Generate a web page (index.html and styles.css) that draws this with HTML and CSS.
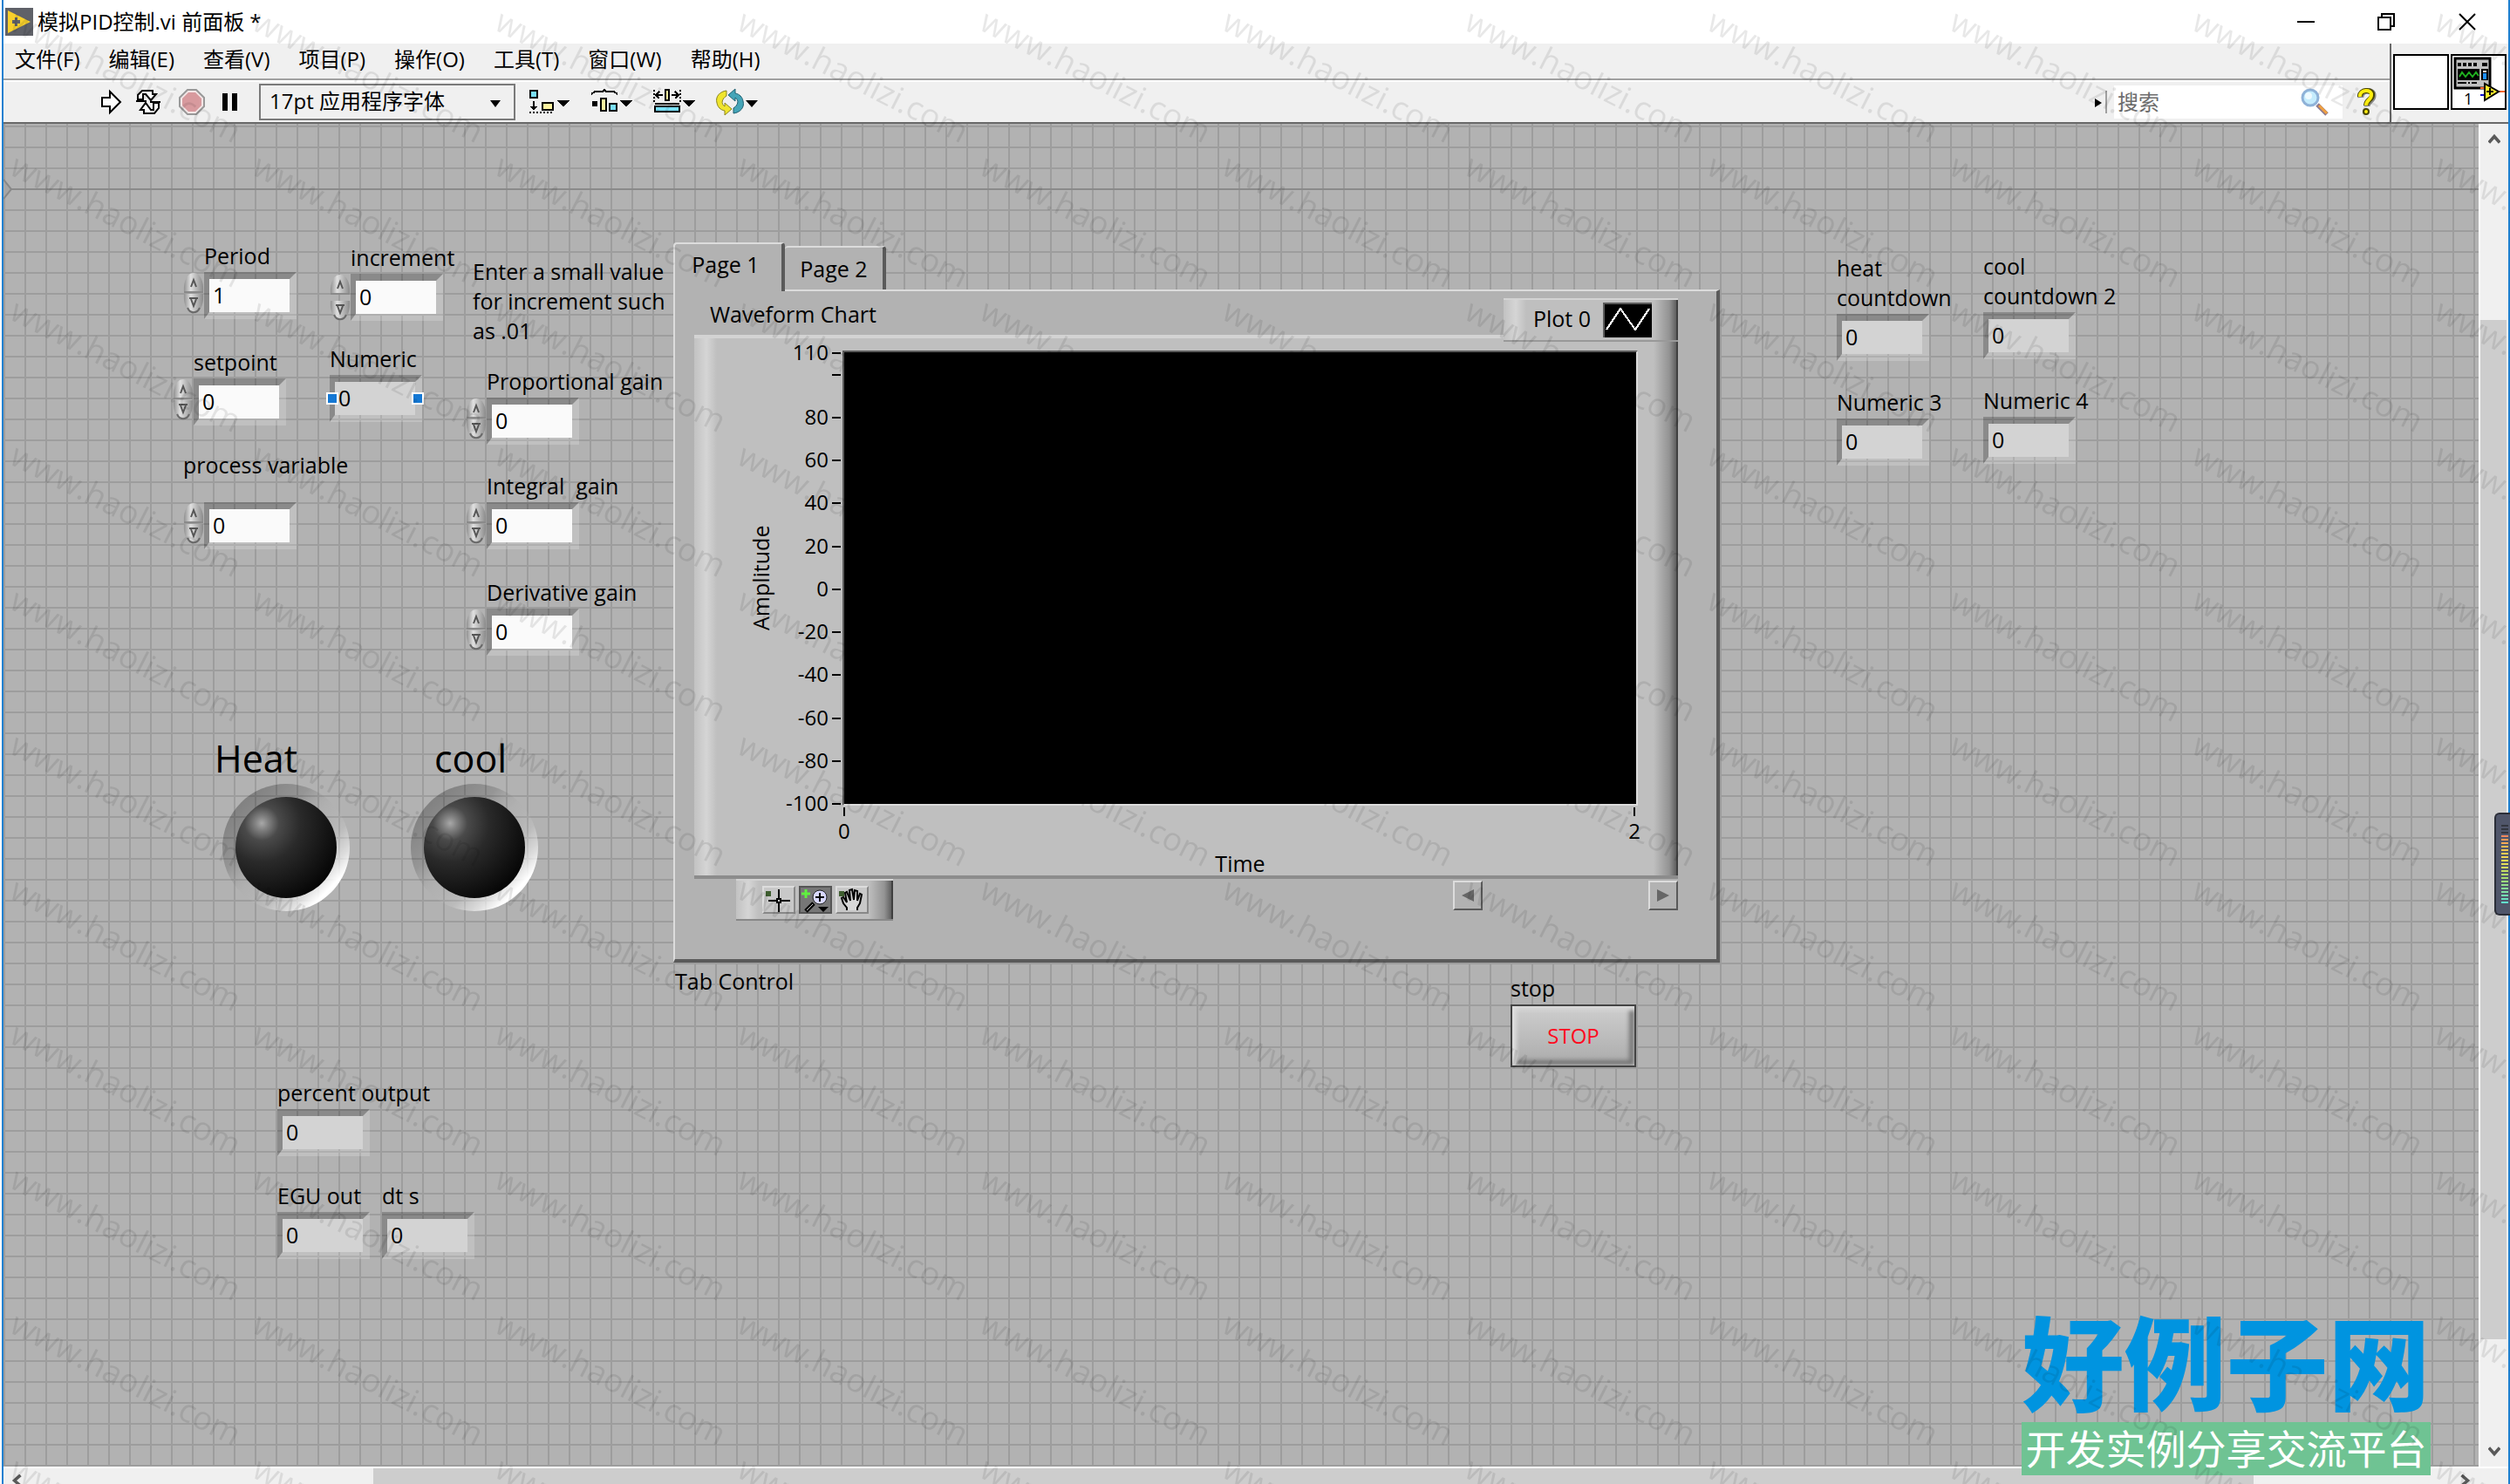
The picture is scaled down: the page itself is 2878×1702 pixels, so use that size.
FILE: index.html
```html
<!DOCTYPE html>
<html lang="zh-CN">
<head>
<meta charset="utf-8">
<title>模拟PID控制.vi 前面板 *</title>
<link rel="stylesheet" href="styles.css">
</head>
<body>
<div class="window">
  <header class="titlebar">
    <svg class="app-icon" viewBox="0 0 32 32" aria-hidden="true"><path fill="#5f6168" d="M0 0h32v32H0z"/><path fill="#f7cf2b" d="M3 3l26 13L3 29z"/><path fill="#5f6168" d="M8 14h3v-3h3v3h3v4h-3v3h-3v-3H8z"/></svg>
    <h1 class="title">模拟PID控制.vi 前面板 *</h1>
    <div class="window-buttons">
      <button type="button" aria-label="最小化"><svg viewBox="0 0 20 20"><path d="M0 10h20" stroke="#000" stroke-width="2"/></svg></button>
      <button type="button" aria-label="还原"><svg viewBox="0 0 20 20" fill="none" stroke="#000" stroke-width="2"><path d="M1 5h14v14H1zM5 5V1h14v14h-4"/></svg></button>
      <button type="button" aria-label="关闭"><svg viewBox="0 0 20 20"><path d="M1 1l18 18M19 1L1 19" stroke="#000" stroke-width="2"/></svg></button>
    </div>
  </header>

  <div class="header">
    <div class="bars">
      <nav class="menubar">
        <button type="button">文件(F)</button>
        <button type="button">编辑(E)</button>
        <button type="button">查看(V)</button>
        <button type="button">项目(P)</button>
        <button type="button">操作(O)</button>
        <button type="button">工具(T)</button>
        <button type="button">窗口(W)</button>
        <button type="button">帮助(H)</button>
      </nav>
      <div class="toolbar">
        <div class="tool-group">
          <button type="button" class="tool" aria-label="运行"><svg viewBox="0 0 32 32"><path d="M6 11h9V4l12 12-12 12v-7H6z" fill="#fff" stroke="#000" stroke-width="2"/></svg></button>
          <button type="button" class="tool" aria-label="连续运行"><svg viewBox="0 0 32 32" fill="#fff" stroke="#000" stroke-width="2"><path d="M4 13V8l5-5h12v4h4l-6 7-6-7h-3v6z"/><path d="M28 17v6l-5 6H11v-4H7l6-8 6 8h3v-8z"/><path d="M2 15h12M18 16h12"/></svg></button>
        </div>
        <div class="tool-group">
          <button type="button" class="tool" aria-label="中止执行"><svg viewBox="0 0 32 32"><path d="M11 2h10l9 9v10l-9 9H11l-9-9V11z" fill="#f3e6e6" stroke="#999" stroke-width="2"/><path d="M12 5h8l7 7v8l-7 7h-8l-7-7v-8z" fill="#d89a9e"/></svg></button>
          <button type="button" class="tool" aria-label="暂停"><svg viewBox="0 0 32 32"><path d="M8 6h6v20H8zM19 6h6v20h-6z"/></svg></button>
        </div>
        <div class="font-picker">
          <select aria-label="字体"><option>17pt 应用程序字体</option></select>
          <svg viewBox="0 0 12 10"><path d="M0 1h12L6 9z"/></svg>
        </div>
        <div class="arrange">
          <button type="button" class="tool-wide" aria-label="对齐对象"><svg viewBox="0 0 50 32" shape-rendering="crispEdges"><path d="M3 3h8v8H3z" fill="#7ae0fa" stroke="#000" stroke-width="2"/><path d="M6 15h2v6h3l-4 5-4-5h3z"/><path d="M17 17h12v8H17z" fill="#fdf3a0" stroke="#000" stroke-width="2"/><path d="M2 28h28" stroke="#000" stroke-width="2" stroke-dasharray="2 2"/><path d="M34 14h14l-7 8z"/></svg></button>
          <button type="button" class="tool-wide" aria-label="分布对象"><svg viewBox="0 0 50 32" shape-rendering="crispEdges"><path d="M1 7l4-3h9l2-2 2 2h9l4 3" fill="none" stroke="#000" stroke-width="2"/><path d="M2 15h6v6H2z"/><path d="M12 12h6v14h-6z" fill="#fdf3a0" stroke="#000" stroke-width="2"/><path d="M22 18h8v8h-8z" fill="#7ae0fa" stroke="#000" stroke-width="2"/><path d="M34 14h14l-7 8z"/></svg></button>
          <button type="button" class="tool-wide" aria-label="调整对象大小"><svg viewBox="0 0 50 32" shape-rendering="crispEdges"><path d="M14 2h4v12h-4z" fill="#fdf3a0" stroke="#000" stroke-width="2"/><path d="M1 2v14M31 2v14" stroke="#000" stroke-width="2" stroke-dasharray="2 2"/><path d="M3 8h8M21 8h8M7 4L3 8l4 4M25 4l4 4-4 4" fill="none" stroke="#000" stroke-width="2"/><path d="M2 18h28" stroke="#000" stroke-width="2"/><path d="M2 21h28v6H2z" fill="#7ae0fa" stroke="#000" stroke-width="2"/><path d="M34 14h14l-7 8z"/></svg></button>
          <button type="button" class="tool-wide" aria-label="重新排序"><svg viewBox="0 0 50 32"><path d="M12 3C4 4-1 10 1 17c1 5 4 8 9 9v5l8-7-8-7v4c-5-3-3-9 2-12z" fill="#f0e52e" stroke="#8a8420" stroke-width="1"/><path d="M20 29c8-1 13-7 11-14-1-5-4-8-9-9V1l-8 7 8 7v-4c5 3 3 9-2 12z" fill="#45a5b8" stroke="#1f5f70" stroke-width="1"/><path d="M34 14h14l-7 8z"/></svg></button>
        </div>
        <div class="search-area">
          <svg class="grip" viewBox="0 0 14 26"><path d="M0 9l8 5-8 5z"/><path d="M12 0h2v26h-2z" fill="#a0a0a0"/></svg>
          <div class="search">
            <input type="text" placeholder="搜索" aria-label="搜索">
            <svg viewBox="0 0 32 32"><path d="M19 19l11 11" stroke="#8d7a8f" stroke-width="5"/><path d="M21 20l9 9" stroke="#f0a040" stroke-width="3"/><circle cx="11" cy="11" r="9" fill="#c5ecfd" stroke="#8fb2d8" stroke-width="3"/><circle cx="9" cy="9" r="4" fill="#eefaff"/></svg>
          </div>
          <button type="button" class="help" aria-label="帮助"><svg viewBox="0 0 24 32"><path d="M5 11C4 1 20 1 19 9c0 6-7 5-7 12" fill="none" stroke="#888" stroke-width="7"/><path d="M4 10C3 1 19 1 18 8c0 6-7 5-7 12" fill="none" stroke="#4a4600" stroke-width="6"/><path d="M4 10C3 1 18 1 17 8c0 6-6 5-6 12" fill="none" stroke="#ffee10" stroke-width="4"/><circle cx="11" cy="27" r="3" fill="#ffee10" stroke="#4a4600" stroke-width="2"/></svg></button>
        </div>
      </div>
    </div>
    <div class="vi-pane">
      <button type="button" class="connector" aria-label="连线板"></button>
      <button type="button" class="vi-icon" aria-label="VI 图标">
        <svg viewBox="0 0 60 60"><path d="M3 3h40v34H3z" fill="#c0c0c0" stroke="#000" stroke-width="3"/><path d="M6 8h4v4H6zM12 8h4v4h-4zM18 8h4v4h-4zM24 8h4v4h-4zM34 8h6v4h-6zM6 15h25v13H6zM33 15h8v13h-8zM6 30h10v2H6zM18 30h2v2h-2zM22 30h6v2h-6z"/><path d="M35 17h4v2h-4z" fill="#fff"/><path d="M35 20h4v7h-4z" fill="#1e90ff"/><path d="M8 24l3-5 4 5 4-5 4 5 4-5 3 4" fill="none" stroke="#20b020" stroke-width="2"/><path d="M32 37h6M52 41h8" stroke="#f5662e" stroke-width="2"/><path d="M32 45h6" stroke="#1010d0" stroke-width="2"/><path d="M37 32v19l16-10z" fill="#fff02e" stroke="#000" stroke-width="2"/><path d="M39 41h8M43 37v8" stroke="#000" stroke-width="2"/></svg>
        <span>1</span>
      </button>
    </div>
  </div>

  <div class="workspace">
    <main class="panel">
      <svg class="origin" viewBox="0 0 10 24"><path d="M0 1l9 11-9 11" fill="#a6a6a6" stroke="#888" stroke-width="2"/></svg>

      <div class="control spin period"><label for="period">Period</label>
        <div class="steps"><button type="button" aria-label="增加 Period"><svg viewBox="0 0 24 24"><use href="#up"/></svg></button><button type="button" aria-label="减少 Period"><svg viewBox="0 0 24 24"><use href="#down"/></svg></button></div>
        <input id="period" type="text" value="1"></div>

      <div class="control spin increment"><label for="increment">increment</label>
        <div class="steps apart"><button type="button" aria-label="增加 increment"><svg viewBox="0 0 24 24"><use href="#up"/></svg></button><button type="button" aria-label="减少 increment"><svg viewBox="0 0 24 24"><use href="#down"/></svg></button></div>
        <input id="increment" type="text" value="0"></div>

      <p class="note">Enter a small value<br>for increment such<br>as .01</p>

      <div class="control spin setpoint"><label for="setpoint">setpoint</label>
        <div class="steps"><button type="button" aria-label="增加 setpoint"><svg viewBox="0 0 24 24"><use href="#up"/></svg></button><button type="button" aria-label="减少 setpoint"><svg viewBox="0 0 24 24"><use href="#down"/></svg></button></div>
        <input id="setpoint" type="text" value="0"></div>

      <div class="control numeric selected"><label for="numeric">Numeric</label>
        <input id="numeric" type="text" value="0" readonly><i class="handle left"></i><i class="handle right"></i></div>

      <div class="control spin process"><label for="process">process variable</label>
        <div class="steps"><button type="button" aria-label="增加 process variable"><svg viewBox="0 0 24 24"><use href="#up"/></svg></button><button type="button" aria-label="减少 process variable"><svg viewBox="0 0 24 24"><use href="#down"/></svg></button></div>
        <input id="process" type="text" value="0"></div>

      <div class="control spin proportional"><label for="kp">Proportional gain</label>
        <div class="steps"><button type="button" aria-label="增加 Proportional gain"><svg viewBox="0 0 24 24"><use href="#up"/></svg></button><button type="button" aria-label="减少 Proportional gain"><svg viewBox="0 0 24 24"><use href="#down"/></svg></button></div>
        <input id="kp" type="text" value="0"></div>

      <div class="control spin integral"><label for="ki">Integral&nbsp; gain</label>
        <div class="steps"><button type="button" aria-label="增加 Integral gain"><svg viewBox="0 0 24 24"><use href="#up"/></svg></button><button type="button" aria-label="减少 Integral gain"><svg viewBox="0 0 24 24"><use href="#down"/></svg></button></div>
        <input id="ki" type="text" value="0"></div>

      <div class="control spin derivative"><label for="kd">Derivative gain</label>
        <div class="steps"><button type="button" aria-label="增加 Derivative gain"><svg viewBox="0 0 24 24"><use href="#up"/></svg></button><button type="button" aria-label="减少 Derivative gain"><svg viewBox="0 0 24 24"><use href="#down"/></svg></button></div>
        <input id="kd" type="text" value="0"></div>

      <div class="lamp-label heat-label">Heat</div>
      <svg class="lamp heat" viewBox="0 0 152 152"><use href="#led"/></svg>
      <div class="lamp-label cool-label">cool</div>
      <svg class="lamp cool" viewBox="0 0 152 152"><use href="#led"/></svg>

      <div class="control percent"><label for="percent">percent output</label><input id="percent" type="text" value="0" readonly></div>
      <div class="control egu"><label for="egu">EGU out</label><input id="egu" type="text" value="0" readonly></div>
      <div class="control dts"><label for="dts">dt s</label><input id="dts" type="text" value="0" readonly></div>

      <div class="control heat-count"><label for="hc">heat<br>countdown</label><input id="hc" type="text" value="0" readonly></div>
      <div class="control cool-count"><label for="cc">cool<br>countdown 2</label><input id="cc" type="text" value="0" readonly></div>
      <div class="control numeric3"><label for="n3">Numeric 3</label><input id="n3" type="text" value="0" readonly></div>
      <div class="control numeric4"><label for="n4">Numeric 4</label><input id="n4" type="text" value="0" readonly></div>

      <section class="tab-control">
        <div class="tabs">
          <button type="button" class="tab active">Page 1</button>
          <button type="button" class="tab">Page 2</button>
        </div>
        <div class="page">
          <div class="chart-head">
            <h2>Waveform Chart</h2>
            <div class="legend">
              <span>Plot 0</span>
              <svg viewBox="0 0 56 40"><path d="M0 0h56v40H0z" fill="#5a5a5a"/><path d="M2 2h54v38H2z"/><path d="M4 31L20 7l17 24L53 7" fill="none" stroke="#fff" stroke-width="2" shape-rendering="crispEdges"/></svg>
            </div>
          </div>
          <div class="chart">
            <div class="y-name">Amplitude</div>
            <ol class="y-axis">
              <li class="half">110</li><li></li><li>80</li><li>60</li><li>40</li><li>20</li><li>0</li><li>-20</li><li>-40</li><li>-60</li><li>-80</li><li class="end">-100</li>
            </ol>
            <div class="plot"></div>
            <div class="x-axis"><span>0</span><span>2</span></div>
            <div class="x-name">Time</div>
          </div>
          <div class="chart-foot">
            <div class="palette">
              <button type="button" aria-label="游标"><svg viewBox="0 0 38 32"><path d="M4 6h6v6H4z" fill="#3f5f30"/><path d="M7 17h9M22 17h10M19 4v10M19 20v10" stroke="#000" stroke-width="2"/><path d="M17 15h4v4h-4z" fill="none" stroke="#000" stroke-width="2"/></svg></button>
              <button type="button" class="on" aria-label="缩放"><svg viewBox="0 0 38 32"><path d="M8 4v10M3 9h10" stroke="#60f040" stroke-width="3"/><path d="M17 20L8 29" stroke="#000" stroke-width="5"/><path d="M16 21l-7 7" stroke="#ccc" stroke-width="1"/><circle cx="24" cy="13" r="8" fill="#d8d8ff" stroke="#222" stroke-width="1"/><path d="M19 13h10M24 8v10" stroke="#000" stroke-width="2"/><path d="M22 24h12l-6 6z"/></svg></button>
              <button type="button" aria-label="平移"><svg viewBox="0 0 38 32"><path d="M4 6h6v6H4z" fill="#3f5f30"/><path d="M13 28v-3l-4-5-2-6 2-1 4 6-2-11 2-1 4 10-1-12 3-1 2 12 1-11 3 1v11l3-8 2 1-2 10-3 5v3" fill="#d8d8d8" stroke="#000" stroke-width="2"/></svg></button>
            </div>
            <div class="chart-scroll">
              <button type="button" aria-label="向左滚动"><svg viewBox="0 0 14 14"><path d="M0 7l14-7v14z"/></svg></button>
              <button type="button" aria-label="向右滚动"><svg viewBox="0 0 14 14"><path d="M0 0l14 7-14 7z"/></svg></button>
            </div>
          </div>
        </div>
        <div class="tab-caption">Tab Control</div>
      </section>

      <div class="control stop"><label for="stop">stop</label><button type="button" id="stop">STOP</button></div>
    </main>

    <div class="vscroll">
      <button type="button" aria-label="向上滚动"><svg viewBox="0 0 16 16"><path d="M1 12l7-8 7 8" fill="none" stroke="#5a5a5a" stroke-width="4"/></svg></button>
      <div class="vthumb"></div>
      <button type="button" aria-label="向下滚动"><svg viewBox="0 0 16 16"><path d="M1 4l7 8 7-8" fill="none" stroke="#5a5a5a" stroke-width="4"/></svg></button>
    </div>
  </div>
  <div class="hscroll">
    <button type="button" aria-label="向左滚动"><svg viewBox="0 0 16 16"><path d="M12 1L4 8l8 7" fill="none" stroke="#5a5a5a" stroke-width="4"/></svg></button>
    <div class="htrack"><div class="hthumb"></div></div>
    <button type="button" aria-label="向右滚动"><svg viewBox="0 0 16 16"><path d="M4 1l8 7-8 7" fill="none" stroke="#5a5a5a" stroke-width="4"/></svg></button>
  </div>
</div>

<aside class="meter"></aside>

<div class="brand">
  <div class="brand-name">好例子网</div>
  <div class="brand-line">开发实例分享交流平台</div>
</div>

<svg class="watermark" aria-hidden="true">
  <defs>
    <pattern id="mark" width="278" height="166" patternUnits="userSpaceOnUse">
      <text transform="translate(9 33) rotate(27)">www.haolizi.com</text>
    </pattern>
  </defs>
  <rect width="100%" height="100%" fill="url(#mark)"/>
</svg>

<svg class="symbols" aria-hidden="true">
  <defs>
    <linearGradient id="knob" x1="0" y1="0" x2="1" y2="0"><stop offset="0" stop-color="#909090"/><stop offset=".35" stop-color="#e0e0e0"/><stop offset="1" stop-color="#8a8a8a"/></linearGradient>
    <radialGradient id="ball" cx=".26" cy=".26" r=".85"><stop offset="0" stop-color="#a8a8a8"/><stop offset=".08" stop-color="#808080"/><stop offset=".2" stop-color="#4a4a4a"/><stop offset=".45" stop-color="#2a2a2a"/><stop offset="1" stop-color="#040404"/></radialGradient>
    <linearGradient id="ring" x1=".14" y1=".14" x2=".86" y2=".86"><stop offset="0" stop-color="#000" stop-opacity=".28"/><stop offset=".3" stop-color="#000" stop-opacity=".16"/><stop offset=".5" stop-color="#999" stop-opacity=".05"/><stop offset=".7" stop-color="#fff" stop-opacity=".12"/><stop offset=".85" stop-color="#fff" stop-opacity=".55"/><stop offset=".96" stop-color="#fff"/></linearGradient>
    <g id="up"><path d="M1 23C0 12 4 1 12 1s12 11 11 22z" fill="url(#knob)"/><path d="M1 23h22" stroke="#8a8a8a" stroke-width="2"/><path d="M9 17l3-8 3 8" fill="none" stroke="#555" stroke-width="2"/></g>
    <g id="down"><path d="M1 1c-1 11 3 22 11 22S24 12 23 1z" fill="url(#knob)"/><path d="M5 17c3 7 11 7 14 0" fill="none" stroke="#6a6a6a" stroke-width="2"/><path d="M7 6h10M9 7l3 8 3-8" fill="none" stroke="#555" stroke-width="2"/></g>
    <g id="led"><circle cx="76" cy="76" r="73" fill="url(#ring)"/><circle cx="76" cy="76" r="58" fill="url(#ball)"/></g>
  </defs>
</svg>
</body>
</html>
```
FILE: styles.css
```css
* { box-sizing: border-box; }

html, body { height: 100%; margin: 0; overflow: hidden; }

body {
  font-family: "Open Sans", "Noto Sans CJK SC", sans-serif;
  font-size: 24px;
  line-height: 34px;
  color: #000;
  background: #fff;
}

button, input, select { font: inherit; color: inherit; }
button { padding: 0; border: 0; background: none; }
svg { display: block; }
h1, h2, p, ol { margin: 0; padding: 0; font-size: inherit; font-weight: 400; list-style: none; }

.window {
  height: 100%;
  margin-left: 2px;
  display: flex;
  flex-direction: column;
  border: solid #1e80d0;
  border-width: 0 2px;
}

/* title bar */
.titlebar { height: 50px; display: flex; align-items: center; background: #fff; }
.app-icon { width: 32px; height: 32px; margin: 0 5px 0 2px; }
.title { flex: 1; }
.window-buttons { display: flex; }
.window-buttons button { width: 92px; height: 50px; display: flex; align-items: center; justify-content: center; }
.window-buttons button:last-child { width: 94px; }
.window-buttons svg { width: 20px; height: 20px; }

/* menu and tool bars */
.header { display: flex; background: #f0f0f0; border-bottom: 2px solid #696969; }
.bars { flex: 1; }
.menubar {
  height: 42px;
  display: flex;
  gap: 33px;
  padding: 0 13px 5px;
  border-bottom: 2px solid #a0a0a0;
}
.toolbar {
  height: 48px;
  display: flex;
  align-items: center;
  padding-left: 107px;
  border-top: 2px solid #fff;
}
.tool-group { display: flex; gap: 11px; margin-right: 18px; }
.tool, .tool svg { width: 32px; height: 32px; }
.font-picker { position: relative; }
.font-picker select {
  width: 294px;
  height: 42px;
  padding: 0 10px 2px;
  appearance: none;
  border: 2px solid #7a7a7a;
  border-radius: 0;
  background: #f0f0f0;
}
.font-picker svg { position: absolute; right: 17px; top: 18px; width: 12px; height: 10px; }
.arrange { display: flex; gap: 22px; margin-left: 14px; }
.tool-wide, .tool-wide svg { width: 50px; height: 32px; }
.search-area { margin-left: auto; display: flex; align-items: center; padding-right: 14px; }
.grip { width: 14px; height: 26px; margin-right: 8px; }
.search { width: 262px; height: 38px; display: flex; align-items: center; background: #fff; padding-right: 16px; }
.search input { flex: 1; min-width: 0; height: 38px; padding: 0 4px 2px; border: 0; background: none; outline: 0; }
.search input::placeholder { color: #6d6d6d; opacity: 1; }
.search svg { width: 32px; height: 32px; }
.help { margin-left: 16px; }
.help, .help svg { width: 24px; height: 32px; }

.vi-pane { display: flex; gap: 2px; padding: 12px 2px 0; border-left: 2px solid #696969; }
.connector, .vi-icon { width: 64px; height: 64px; border: 2px solid #000; background: #fff; }
.vi-icon { position: relative; }
.vi-icon svg { width: 60px; height: 60px; }
.vi-icon span { position: absolute; left: 13px; bottom: -1px; font-size: 18px; line-height: 24px; }

/* front panel canvas */
.workspace { flex: 1; min-height: 0; display: flex; }
.panel {
  position: relative;
  flex: 1;
  background-color: #b2b2b2;
  background-image:
    linear-gradient(#8a8a8a, #8a8a8a),
    linear-gradient(90deg, #9d9d9d 2px, transparent 2px),
    linear-gradient(#9d9d9d 2px, transparent 2px);
  background-size: 100% 2px, 24px 24px, 24px 24px;
  background-position: 0 74px, 0 0, 0 2px;
  background-repeat: no-repeat, repeat, repeat;
}
.origin { position: absolute; left: 0; top: 63px; width: 10px; height: 24px; }

.control { position: absolute; display: grid; justify-items: start; row-gap: 2px; font-size: 25px; }
.control label { white-space: nowrap; }
.control input {
  width: 106px;
  height: 54px;
  padding: 0 4px 2px;
  border: 8px solid;
  border-left-width: 6px;
  border-color: rgba(0,0,0,.22) rgba(255,255,255,.18) rgba(255,255,255,.18) rgba(0,0,0,.22);
  background: #fafafa padding-box;
  outline: 0;
}
.control input[readonly] { background: #d3d3d3 padding-box; }
.spin { grid-template-columns: 24px auto; }
.spin label { grid-column: 2; }
.steps { width: 24px; height: 48px; display: flex; flex-direction: column; }
.steps.apart { height: 54px; justify-content: space-between; }
.steps button, .steps svg { width: 24px; height: 24px; }

.period { left: 206px; top: 134px; }
.increment { left: 374px; top: 136px; }
.setpoint { left: 194px; top: 256px; }
.numeric { left: 374px; top: 252px; }
.process { left: 206px; top: 374px; row-gap: 26px; }
.process label { grid-column: 1 / 3; }
.proportional { left: 530px; top: 278px; }
.integral { left: 530px; top: 398px; }
.derivative { left: 530px; top: 520px; }
.percent { left: 314px; top: 1094px; }
.egu { left: 314px; top: 1212px; }
.dts { left: 434px; top: 1212px; }
.heat-count { left: 2102px; top: 148px; }
.cool-count { left: 2270px; top: 146px; }
.numeric3 { left: 2102px; top: 302px; }
.numeric4 { left: 2270px; top: 300px; }
.note { position: absolute; left: 538px; top: 152px; font-size: 25px; }

.handle { position: absolute; top: 56px; width: 14px; height: 14px; border: 2px solid #fff; background: #1478d4; }
.handle.left { left: -4px; }
.handle.right { right: -2px; }

.lamp-label { position: absolute; font-size: 43px; line-height: 56px; }
.heat-label { left: 242px; top: 700px; }
.cool-label { left: 494px; top: 700px; }
.lamp { position: absolute; top: 754px; width: 152px; height: 152px; }
.heat { left: 248px; }
.cool { left: 464px; }

/* tab control with the chart */
.tab-control { position: absolute; left: 768px; top: 136px; width: 1200px; font-size: 25px; }
.tabs { display: flex; align-items: flex-end; }
.tab {
  height: 50px;
  width: 116px;
  border: solid #dcdcdc;
  border-width: 2px 4px 0 0;
  border-right-color: #5a5a5a;
  border-radius: 4px 4px 0 0;
  background: #b2b2b2;
}
.tab.active { position: relative; width: 128px; height: 56px; margin-bottom: -2px; padding: 0 6px 8px 0; border-left-width: 2px; }
.page {
  border: solid #dcdcdc;
  border-width: 2px 4px 4px 2px;
  border-right-color: #5a5a5a;
  border-bottom-color: #5a5a5a;
  background: #b2b2b2;
  padding: 8px 44px 44px 22px;
}
.chart-head { display: flex; justify-content: space-between; height: 42px; padding-left: 18px; }
.chart-head h2 { line-height: 36px; }
.legend {
  position: relative;
  width: 200px;
  height: 50px;
  display: flex;
  align-items: center;
  justify-content: flex-end;
  gap: 14px;
  padding-right: 30px;
  border-top: 2px solid #d3d3d3;
  border-bottom: 2px solid #999;
}
.legend span { padding-bottom: 4px; }
.legend svg { width: 56px; height: 40px; }
.legend, .palette, .chart {
  background: linear-gradient(90deg, #c2c2c2, #d5d5d5 14px, #bfbfbf 26px, #bfbfbf calc(100% - 28px), #939393 calc(100% - 10px), #606060 calc(100% - 2px), #404040 calc(100% - 2px));
}
.chart {
  height: 624px;
  display: grid;
  grid-template-columns: 64px 106px 1fr;
  grid-template-rows: 522px 48px 1fr;
  padding: 14px 46px 0 0;
  border-top: 4px solid #d3d3d3;
  border-bottom: 4px solid #8c8c8c;
}
.y-name { writing-mode: vertical-rl; transform: rotate(180deg); text-align: center; justify-self: start; line-height: 34px; width: 34px; margin-left: 59px; }
.y-axis { display: flex; flex-direction: column; padding: 2px 2px 1px 0; font-size: 24px; }
.y-axis li { flex: 2 0 0; height: 0; min-height: 0; display: flex; justify-content: flex-end; align-items: flex-start; line-height: 0; }
.y-axis li::after { content: ""; width: 10px; height: 2px; margin-left: 4px; background: #000; }
.y-axis .half { flex-grow: 1; }
.y-axis .end { flex: 0 0 2px; }
.plot { background: #000; border: 2px solid #dcdcdc; border-top-color: #5a5a5a; border-left-color: #5a5a5a; }
.x-axis { grid-column: 3; display: flex; justify-content: space-between; font-size: 24px; margin: 2px -3px 0 -5px; }
.x-axis span::before { content: ""; display: block; width: 2px; height: 10px; margin: 0 auto; background: #000; }
.x-name { grid-column: 3; text-align: center; line-height: 36px; }
.chart-foot { display: flex; justify-content: space-between; padding-left: 48px; }
.palette { width: 180px; height: 48px; display: flex; gap: 4px; padding: 6px 0 0 30px; border-top: 2px solid #d3d3d3; border-bottom: 2px solid #888; }
.palette button { width: 38px; height: 32px; background: #c8c8c8; border: solid #ddd; border-width: 2px; border-right-color: #888; border-bottom-color: #888; }
.palette button.on { background: #777; border-color: #555; }
.palette svg { width: 38px; height: 32px; margin: -2px; }
.chart-scroll { width: 258px; display: flex; justify-content: space-between; padding-top: 2px; }
.chart-scroll button {
  width: 34px;
  height: 34px;
  display: flex;
  align-items: center;
  justify-content: center;
  border: 2px solid #dcdcdc;
  border-right-color: #5a5a5a;
  border-bottom-color: #5a5a5a;
}
.chart-scroll svg { width: 14px; height: 14px; fill: #666; }
.tab-caption { padding: 4px 0 0 2px; }

.stop { left: 1728px; top: 974px; }
.stop button {
  width: 144px;
  height: 72px;
  font-size: 24px;
  color: #ff0a1e;
  border: 2px solid #444;
  background: linear-gradient(#cecece, #ababab);
  box-shadow: inset 5px 0 4px #dedede, inset 0 5px 4px #d6d6d6, inset -6px 0 5px #777, inset 0 -6px 5px #777;
}

/* window scroll bars */
.vscroll { width: 34px; display: grid; grid-template-rows: 225px 1fr 146px; background: #f0f0f0; border-left: 2px solid #fff; }
.vscroll button { height: 36px; display: flex; align-items: center; justify-content: center; }
.vscroll button:last-child { align-self: end; }
.vscroll svg, .hscroll svg { width: 14px; height: 14px; }
.vthumb { background: #cdcdcd; margin-right: 2px; }
.hscroll { height: 20px; display: flex; overflow: hidden; background: #f0f0f0; border-top: 2px solid #fff; padding-right: 34px; }
.hscroll button { width: 32px; height: 28px; flex: none; display: flex; align-items: center; justify-content: center; }
.htrack { flex: 1; padding: 0 226px 0 392px; }
.hthumb { height: 18px; background: #cdcdcd; }

/* floating level meter at the screen edge */
.meter {
  position: absolute;
  right: 0;
  top: 932px;
  width: 18px;
  height: 118px;
  border: solid #2b2e38;
  border-width: 2px 0 2px 2px;
  border-radius: 6px 0 0 6px;
  background: #50566a;
}
.meter::before {
  content: "";
  position: absolute;
  left: 6px;
  top: 12px;
  width: 8px;
  height: 90px;
  background:
    repeating-linear-gradient(transparent 0 2px, #50566a 2px 4px),
    linear-gradient(#33363f 11px, #f4805f 11px, #f3c052 26px, #f0df55 42px, #a8dc6c 60px, #5fe0d0 90px);
}

/* site brand and watermark */
.brand { position: absolute; right: 91px; bottom: 10px; width: 469px; text-align: center; white-space: nowrap; }
.brand-name { font-family: "Noto Sans CJK SC", sans-serif; font-weight: 900; font-size: 117px; line-height: 130px; margin-bottom: 8px; color: #0094e0; }
.brand-line { font-size: 46px; line-height: 61px; color: #fff; background: #6fc393; }
.watermark { position: absolute; left: 0; top: 0; width: 100%; height: 100%; pointer-events: none; }
.watermark text { font-family: "Open Sans", sans-serif; font-size: 37px; fill: #000; fill-opacity: .09; }
.symbols { position: absolute; width: 0; height: 0; }
```
